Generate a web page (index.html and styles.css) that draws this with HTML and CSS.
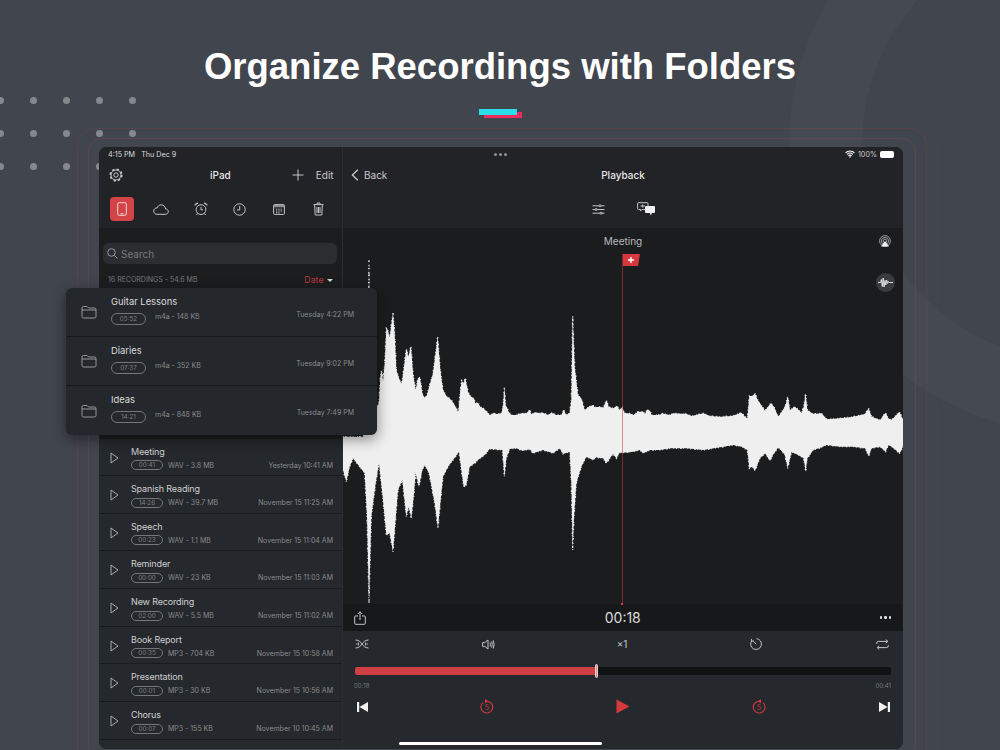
FILE: index.html
```html
<!DOCTYPE html>
<html lang="en">
<head>
    <meta charset="UTF-8">
    <title>Organize Recordings with Folders</title>
    <link rel="stylesheet" href="styles.css">
</head>
<body>
    <svg class="defs" width="0" height="0">
        <symbol id="i-play" viewBox="0 0 9 12"><path d="M1 1 L8 6 L1 11 Z"/></symbol>
        <symbol id="i-folder" viewBox="0 0 16 14"><path d="M1 3 Q1 1.5 2.5 1.5 H6 L7.5 3 H13.5 Q15 3 15 4.5 V11.5 Q15 13 13.5 13 H2.5 Q1 13 1 11.5 Z M1 5 H15"/></symbol>
    </svg>

    <div class="backdrop">
        <div class="ring-bg"></div>
        <div class="dots">
            <i></i><i></i><i></i><i></i><i></i>
            <i></i><i></i><i></i><i></i><i></i>
            <i></i><i></i><i></i><i></i><i></i>
        </div>
        <div class="outline outline-1"></div>
        <div class="outline outline-2"></div>
        <div class="outline outline-3"></div>
    </div>

    <h1 class="title">Organize Recordings with Folders</h1>
    <div class="accent"></div>

    <div class="device">
        <!-- Left column -->
        <div class="sidebar">
            <div class="top">
                <div class="status">
                    <span>4:15 PM</span><span class="status-date">Thu Dec 9</span>
                </div>
                <div class="nav side-nav">
                    <svg class="ic gear" width="14" height="14" viewBox="0 0 14 14"><circle cx="7" cy="7" r="2.2"/><circle cx="7" cy="7" r="5"/><circle class="teeth" cx="7" cy="7" r="5.8"/></svg>
                    <span class="nav-title">iPad</span>
                    <svg class="ic plus" width="12" height="12" viewBox="0 0 12 12"><path d="M6 0.5 V11.5 M0.5 6 H11.5"/></svg>
                    <span class="nav-link">Edit</span>
                </div>
                <div class="side-tools">
                    <span class="tool-active"><svg class="ic" width="10" height="14" viewBox="0 0 10 14"><rect x="0.7" y="0.7" width="8.6" height="12.6" rx="1.5"/><path d="M3.5 11.8 H6.5"/></svg></span>
                    <svg class="ic" width="16" height="11" viewBox="0 0 16 11"><path d="M4 10.3 H12.3 C14 10.3 15.3 9 15.3 7.6 C15.3 6 14 4.9 12.6 5 C12.2 2.5 10.4 0.8 8.2 0.8 C6.2 0.8 4.8 2.2 4.3 3.8 C2.2 3.9 0.7 5.3 0.7 7.1 C0.7 9 2.2 10.3 4 10.3 Z"/></svg>
                    <svg class="ic" width="14" height="14" viewBox="0 0 14 14"><circle cx="7" cy="7.6" r="4.9"/><path d="M7 4.8 V7.8 H9 M0.9 3.2 C1.2 1.6 2.6 0.8 4 1.2 Z M13.1 3.2 C12.8 1.6 11.4 0.8 10 1.2 Z M3.4 11.4 L2.4 13 M10.6 11.4 L11.6 13"/></svg>
                    <svg class="ic" width="13" height="13" viewBox="0 0 13 13"><circle cx="6.5" cy="6.5" r="5.7"/><path d="M6.7 2.8 V6.9 H3.8"/></svg>
                    <svg class="ic" width="12" height="11" viewBox="0 0 12 11"><rect x="0.6" y="0.6" width="10.8" height="9.8" rx="1"/><path class="ic-fill" d="M1 1 H11 V3.2 H1 Z"/><path d="M3 5.2 H9 M3 7 H9 M3 8.8 H7" stroke-dasharray="1 0.7"/></svg>
                    <svg class="ic" width="11" height="14" viewBox="0 0 11 14"><path d="M0.5 2.6 H10.5 M4 2.4 V1 H7 V2.4 M1.6 2.8 L2.2 13 H8.8 L9.4 2.8 M4 5 V11 M5.5 5 V11 M7 5 V11"/></svg>
                </div>
            </div>

            <div class="search-wrap">
                <div class="search">
                    <svg class="ic" width="11" height="11" viewBox="0 0 11 11"><circle cx="4.5" cy="4.5" r="3.8"/><path d="M7.3 7.3 L10.5 10.5"/></svg>
                    <span>Search</span>
                </div>
            </div>
            <div class="count-row">
                <span>16 RECORDINGS - 54.6 MB</span>
                <span class="sort">Date <b class="caret"></b></span>
            </div>

            <div class="list">
                <div class="row">
                    <svg class="row-play"><use href="#i-play"/></svg>
                    <div class="row-body">
                        <div class="row-name">Meeting</div>
                        <div class="row-info"><span class="pill">00:41</span><span>WAV - 3.8 MB</span><span class="row-date">Yesterday 10:41 AM</span></div>
                    </div>
                </div>
                <div class="row">
                    <svg class="row-play"><use href="#i-play"/></svg>
                    <div class="row-body">
                        <div class="row-name">Spanish Reading</div>
                        <div class="row-info"><span class="pill">14:26</span><span>WAV - 39.7 MB</span><span class="row-date">November 15 11:25 AM</span></div>
                    </div>
                </div>
                <div class="row">
                    <svg class="row-play"><use href="#i-play"/></svg>
                    <div class="row-body">
                        <div class="row-name">Speech</div>
                        <div class="row-info"><span class="pill">00:23</span><span>WAV - 1.1 MB</span><span class="row-date">November 15 11:04 AM</span></div>
                    </div>
                </div>
                <div class="row">
                    <svg class="row-play"><use href="#i-play"/></svg>
                    <div class="row-body">
                        <div class="row-name">Reminder</div>
                        <div class="row-info"><span class="pill">00:00</span><span>WAV - 23 KB</span><span class="row-date">November 15 11:03 AM</span></div>
                    </div>
                </div>
                <div class="row">
                    <svg class="row-play"><use href="#i-play"/></svg>
                    <div class="row-body">
                        <div class="row-name">New Recording</div>
                        <div class="row-info"><span class="pill">02:00</span><span>WAV - 5.5 MB</span><span class="row-date">November 15 11:02 AM</span></div>
                    </div>
                </div>
                <div class="row">
                    <svg class="row-play"><use href="#i-play"/></svg>
                    <div class="row-body">
                        <div class="row-name">Book Report</div>
                        <div class="row-info"><span class="pill">00:35</span><span>MP3 - 704 KB</span><span class="row-date">November 15 10:58 AM</span></div>
                    </div>
                </div>
                <div class="row">
                    <svg class="row-play"><use href="#i-play"/></svg>
                    <div class="row-body">
                        <div class="row-name">Presentation</div>
                        <div class="row-info"><span class="pill">00:01</span><span>MP3 - 30 KB</span><span class="row-date">November 15 10:56 AM</span></div>
                    </div>
                </div>
                <div class="row">
                    <svg class="row-play"><use href="#i-play"/></svg>
                    <div class="row-body">
                        <div class="row-name">Chorus</div>
                        <div class="row-info"><span class="pill">00:07</span><span>MP3 - 155 KB</span><span class="row-date">November 10 10:45 AM</span></div>
                    </div>
                </div>
                <div class="row">
                    <svg class="row-play"><use href="#i-play"/></svg>
                    <div class="row-body">
                        <div class="row-name">Best Day Of My Life</div>
                    </div>
                </div>
            </div>
        </div>

        <!-- Right column -->
        <div class="detail">
            <div class="top">
                <div class="status status-right">
                    <span class="multi"><i></i><i></i><i></i></span>
                    <span class="status-icons">
                        <svg class="wifi" width="10" height="8" viewBox="0 0 10 8"><path d="M0.5 2.8 C3 0.4 7 0.4 9.5 2.8 M2 4.3 C3.7 2.8 6.3 2.8 8 4.3 M3.4 5.7 C4.3 5 5.7 5 6.6 5.7"/><circle cx="5" cy="7" r="0.8"/></svg>
                        <span>100%</span>
                        <span class="battery"></span>
                    </span>
                </div>
                <div class="nav detail-nav">
                    <span class="back">
                        <svg class="ic chevron" width="8" height="12" viewBox="0 0 8 12"><path d="M6.8 0.8 L1.4 6 L6.8 11.2"/></svg>
                        Back
                    </span>
                    <span class="nav-title">Playback</span>
                    <span></span>
                </div>
                <div class="detail-tools">
                    <svg class="ic" width="13" height="11" viewBox="0 0 13 11"><path d="M0.5 1.8 H7 M9 1.8 H12.5 M0.5 5.5 H3 M5 5.5 H12.5 M0.5 9.2 H8 M10 9.2 H12.5"/><circle cx="8" cy="1.8" r="1"/><circle cx="4" cy="5.5" r="1"/><circle cx="9" cy="9.2" r="1"/></svg>
                    <svg class="ic" width="18" height="14" viewBox="0 0 18 14"><path d="M1.5 0.7 H10 Q11 0.7 11 1.7 V6.5 Q11 7.5 10 7.5 H5 L3.5 9 V7.5 H1.5 Q0.6 7.5 0.6 6.5 V1.7 Q0.6 0.7 1.5 0.7 Z M3.5 4 H8 M5.7 2.4 V5.6"/><path class="ic-solid" d="M9 4 H17 Q18 4 18 5 V10 Q18 11 17 11 H15 L13.5 13.5 L13 11 H9 Q8 11 8 10 V5 Q8 4 9 4 Z"/></svg>
                </div>
            </div>

            <div class="wave-area">
                <div class="wave-title">Meeting</div>
                <svg class="waveform" viewBox="0 0 1680 1080" preserveAspectRatio="none">
                    <polygon points="0,560 60,560 72,540 76,300 78,30 80,300 84,500 100,480 108,455 112,380 116,360 120,395 125,340 130,235 135,240 140,265 146,215 150,188 155,250 160,360 168,385 176,403 183,350 190,295 196,322 204,288 210,370 218,420 225,385 231,382 238,430 245,445 252,435 258,412 270,370 284,260 292,360 300,420 312,440 325,450 335,465 346,487 352,420 356,392 362,400 367,383 375,425 382,438 392,445 397,460 405,458 412,470 420,475 430,483 440,495 452,490 462,492 475,490 480,470 484,412 488,465 497,485 505,495 520,495 535,490 550,490 560,480 565,493 578,487 590,490 600,488 615,495 625,488 640,495 655,495 662,480 670,495 680,488 685,450 689,195 695,350 705,435 715,445 725,480 735,472 750,465 755,472 770,470 780,475 790,450 797,470 810,475 822,468 830,480 838,472 845,490 860,490 871,495 885,485 901,485 906,492 911,480 921,482 926,495 951,495 956,490 981,495 991,490 1031,492 1046,498 1081,490 1101,498 1131,500 1166,498 1196,488 1206,500 1213,505 1219,438 1228,438 1236,430 1244,450 1251,460 1266,482 1283,460 1293,470 1306,500 1321,478 1328,465 1334,438 1341,480 1356,470 1376,488 1382,470 1388,430 1393,480 1411,492 1436,490 1451,508 1491,505 1531,500 1566,492 1577,475 1586,500 1611,510 1628,488 1636,505 1646,510 1669,485 1676,500 1680,508 1680,585 1676,600 1670,610 1646,590 1636,585 1628,605 1611,590 1586,595 1577,618 1566,595 1531,590 1491,590 1451,585 1436,592 1411,600 1393,625 1388,665 1382,625 1371,618 1346,605 1334,655 1325,612 1321,610 1306,592 1290,615 1281,632 1266,610 1251,625 1236,662 1228,650 1219,655 1213,600 1196,590 1171,585 1131,592 1081,600 1031,595 981,595 951,600 921,600 901,610 891,600 871,605 840,608 830,608 820,625 810,612 790,640 780,625 760,622 750,630 730,620 715,650 700,700 693,800 689,900 685,700 680,605 660,612 650,595 630,610 600,600 570,610 560,598 540,602 520,595 500,597 490,625 484,680 478,600 440,597 425,615 405,630 395,640 380,650 370,705 362,710 355,660 348,605 330,630 315,650 300,680 292,760 285,835 275,760 258,670 245,645 238,660 228,710 218,670 212,740 205,805 197,770 190,800 178,690 165,720 150,905 140,850 130,855 118,730 108,640 98,700 85,800 78,1060 72,800 65,670 50,650 30,625 20,650 10,695 0,660"/>
                </svg>
                <div class="playhead"></div>
                <svg class="flag" width="17" height="12" viewBox="0 0 17 12"><path d="M0 0 H17 L15 12 H0 Z"/><path class="flag-plus" d="M8 3 V9 M5 6 H11"/></svg>
                <svg class="ic airplay" width="12" height="12" viewBox="0 0 12 12"><circle cx="6" cy="6" r="5.4"/><circle cx="6" cy="6" r="3.6"/><circle cx="6" cy="6" r="1.8"/><path class="ic-solid" d="M6 6 L10 11.6 H2 Z"/></svg>
                <span class="wave-btn">
                    <svg class="ic" width="15" height="11" viewBox="0 0 15 11"><path d="M0 5.5 H2.6 L3.4 2.5 L4.3 9.5 L5.2 1 L6.1 10 L7 3.5 L7.8 8 L8.6 3 L9.6 6.5 L10.4 4.5 L11.2 5.5 H15"/></svg>
                </span>
            </div>

            <div class="time-row">
                <svg class="ic" width="12" height="14" viewBox="0 0 12 14"><path d="M4 5 H1.5 Q0.7 5 0.7 5.8 V12.4 Q0.7 13.3 1.5 13.3 H10.5 Q11.3 13.3 11.3 12.4 V5.8 Q11.3 5 10.5 5 H8 M6 9 V0.8 M3.8 3 L6 0.8 L8.2 3"/></svg>
                <span class="time">00:18</span>
                <span class="more"><i></i><i></i><i></i></span>
            </div>

            <div class="controls">
                <div class="ctrl-row">
                    <span class="slot"><svg class="ic" width="14" height="10" viewBox="0 0 14 10"><path d="M0.5 1 C4 1 6 3.5 7 5 C8 6.5 10 9 13.5 9 M0.5 9 C4 9 6 6.5 7 5 C8 3.5 10 1 13.5 1 M1 5 H2.4 M3.4 3.5 V6.5 M10.6 3.5 V6.5 M11.6 5 H13"/></svg></span>
                    <span class="slot slot-wide"><svg class="ic" width="13" height="11" viewBox="0 0 13 11"><path d="M0.6 3.6 H2.8 L6 1 V10 L2.8 7.4 H0.6 Z M8 3.6 Q9 5.5 8 7.4 M9.6 2.4 Q11 5.5 9.6 8.6 M11.2 1.4 Q13 5.5 11.2 9.6"/></svg></span>
                    <span class="slot slot-wide speed">×1</span>
                    <span class="slot slot-wide"><svg class="ic" width="12" height="12" viewBox="0 0 12 12"><path d="M6.6 0.7 A5.4 5.4 0 1 1 1.6 3 M1.4 0.9 L1.6 3.2 L4 3 M6.2 6.3 L3.8 3.6"/></svg></span>
                    <span class="slot"><svg class="ic" width="13" height="11" viewBox="0 0 13 11"><path d="M0.7 5 V4.2 Q0.7 2.4 2.5 2.4 H11.8 M9.8 0.5 L11.8 2.4 L9.8 4.3 M12.3 6 V6.8 Q12.3 8.6 10.5 8.6 H1.2 M3.2 6.7 L1.2 8.6 L3.2 10.5"/></svg></span>
                </div>
                <div class="progress-bar">
                    <div class="progress" style="width: 45%"></div>
                    <div class="knob"></div>
                </div>
                <div class="progress-times"><span>00:18</span><span>00:41</span></div>
                <div class="transport">
                    <svg class="solid-w" width="11" height="10" viewBox="0 0 11 10"><path d="M0 0 H2.2 V10 H0 Z M11 0 V10 L2.4 5 Z"/></svg>
                    <span class="slot-33"><svg class="ic-red" width="14" height="15" viewBox="0 0 14 15"><path d="M8 2.3 A5.9 5.9 0 1 1 3 3.6"/><path class="red-solid" d="M5 0 L8.4 2.2 L5 4.4 Z"/><text x="7" y="11" text-anchor="middle">5</text></svg></span>
                    <span class="slot-33"><svg class="red-solid" width="14" height="15" viewBox="0 0 14 15"><path d="M0.5 0.5 L13.5 7.5 L0.5 14.5 Z"/></svg></span>
                    <span class="slot-33"><svg class="ic-red" width="14" height="15" viewBox="0 0 14 15"><path d="M6 2.3 A5.9 5.9 0 1 0 11 3.6"/><path class="red-solid" d="M9 0 L5.6 2.2 L9 4.4 Z"/><text x="7" y="11" text-anchor="middle">5</text></svg></span>
                    <svg class="solid-w" width="11" height="10" viewBox="0 0 11 10"><path d="M11 0 H8.8 V10 H11 Z M0 0 V10 L8.6 5 Z"/></svg>
                </div>
            </div>
        </div>

        <div class="home-bar"></div>

        <!-- Folder popup sitting over the list -->
        <div class="popup">
            <div class="folder-row">
                <svg class="folder-icon"><use href="#i-folder"/></svg>
                <div class="folder-body">
                    <div class="folder-name">Guitar Lessons</div>
                    <div class="folder-info"><span class="pill pill-lg">05:52</span><span class="folder-meta">m4a - 148 KB</span><span class="folder-date">Tuesday 4:22 PM</span></div>
                </div>
            </div>
            <div class="folder-row">
                <svg class="folder-icon"><use href="#i-folder"/></svg>
                <div class="folder-body">
                    <div class="folder-name">Diaries</div>
                    <div class="folder-info"><span class="pill pill-lg">07:37</span><span class="folder-meta">m4a - 352 KB</span><span class="folder-date">Tuesday 9:02 PM</span></div>
                </div>
            </div>
            <div class="folder-row">
                <svg class="folder-icon"><use href="#i-folder"/></svg>
                <div class="folder-body">
                    <div class="folder-name">Ideas</div>
                    <div class="folder-info"><span class="pill pill-lg">14:21</span><span class="folder-meta">m4a - 848 KB</span><span class="folder-date">Tuesday 7:49 PM</span></div>
                </div>
            </div>
        </div>
    </div>
</body>
</html>
```
FILE: styles.css
```css
html, body {
    margin: 0;
    padding: 0;
}

body {
    position: relative;
    width: 1000px;
    height: 750px;
    overflow: hidden;
    background-color: #41454d;
    font-family: Inter, "Liberation Sans", sans-serif;
    color: #d5d6d8;
}

.defs {
    position: absolute;
}

/* background decoration */
.backdrop {
    position: absolute;
    inset: 0;
    overflow: hidden;
}

.ring-bg {
    position: absolute;
    left: 789px;
    top: -144px;
    width: 432px;
    height: 432px;
    border: 73px solid #454951;
    border-radius: 50%;
}

.dots {
    position: absolute;
    left: -3px;
    top: 97px;
    display: grid;
    grid-template-columns: repeat(5, 7px);
    grid-auto-rows: 7px;
    column-gap: 26px;
    row-gap: 26px;
}

.dots i {
    border-radius: 50%;
    background-color: #85888d;
}

.outline {
    position: absolute;
    border: 1px solid rgba(170, 70, 75, 0.26);
    border-radius: 14px;
}

.outline-1 {
    left: 88px;
    top: 138px;
    width: 826px;
    height: 620px;
}

.outline-2 {
    left: 77px;
    top: 128px;
    width: 848px;
    height: 640px;
    border-color: rgba(170, 70, 75, 0.18);
    border-radius: 18px;
}

.outline-3 {
    left: 70px;
    top: 121px;
    width: 865px;
    height: 654px;
    border-color: rgba(170, 70, 75, 0.09);
    border-radius: 22px;
}

.title {
    position: relative;
    margin: 0;
    padding-top: 45px;
    font-family: "Liberation Sans", Arial, sans-serif;
    font-size: 36.5px;
    line-height: 44px;
    font-weight: bold;
    text-align: center;
    color: #ffffff;
}

.accent {
    position: relative;
    width: 38px;
    height: 6px;
    margin: 20px 0 0 479px;
    background-color: #2bdde6;
    box-shadow: 5px 3px 0 #ee2b5e;
}

/* device frame */
.device {
    position: relative;
    display: flex;
    width: 804px;
    height: 602px;
    margin: 32px 0 0 99px;
}

.sidebar, .detail {
    position: relative;
    display: flex;
    flex-direction: column;
    overflow: hidden;
}

.sidebar > *, .detail > * {
    flex-shrink: 0;
}

.sidebar {
    width: 243px;
    flex-shrink: 0;
    border-right: 1px solid #2c2d30;
    border-radius: 8px 0 0 8px;
    background-color: #1c1d1f;
}

.detail {
    flex: 1;
    border-radius: 0 8px 8px 0;
    background-color: #1b1c1e;
}

.top {
    height: 81px;
    background-color: #222326;
}

.status {
    display: flex;
    align-items: center;
    height: 14px;
    padding: 0 9px;
    font-size: 7.2px;
    color: #dcdcdd;
}

.status-date {
    margin-left: 6px;
}

.status-right {
    position: relative;
    justify-content: flex-end;
}

.multi {
    position: absolute;
    left: 151px;
    top: 6px;
    display: flex;
    gap: 2px;
}

.multi i {
    width: 3px;
    height: 3px;
    border-radius: 50%;
    background-color: #8e8f91;
}

.status-icons {
    display: flex;
    align-items: center;
    gap: 2px;
    color: #c9cacb;
}

.wifi {
    fill: #ffffff;
    margin-right: 1px;
}

.wifi path {
    fill: none;
    stroke: #ffffff;
    stroke-width: 1.1;
}

.battery {
    display: block;
    width: 14px;
    height: 7px;
    margin-left: 1px;
    border-radius: 2px;
    background-color: #ffffff;
}

.ic {
    fill: none;
    stroke: #c4c5c7;
    stroke-width: 1;
    flex-shrink: 0;
}

.ic-fill {
    fill: #8d8e90;
    stroke: none;
}

.ic-solid {
    fill: #f1f1f1;
    stroke: none;
}

.teeth {
    stroke-width: 1.6;
    stroke-dasharray: 2.3 2.25;
}

.nav {
    display: flex;
    align-items: center;
    height: 28px;
    font-size: 10px;
}

.side-nav {
    padding: 0 10px;
}

.nav-title {
    font-weight: 500;
    color: #e6e6e7;
}

.side-nav .nav-title {
    margin-left: 87px;
}

.side-nav .plus {
    margin-left: 61px;
}

.nav-link {
    margin-left: 12px;
    color: #c8c9ca;
}

.side-tools {
    display: grid;
    grid-template-columns: repeat(6, 39.3px);
    justify-items: center;
    align-items: center;
    height: 38px;
    padding: 1px 0 0 3.4px;
}

.tool-active {
    display: flex;
    align-items: center;
    justify-content: center;
    width: 24px;
    height: 24px;
    border-radius: 4px;
    background-color: #d34448;
}

.tool-active .ic {
    stroke: #f3d6d7;
}

.search-wrap {
    padding: 15px 5px 0 4px;
}

.search {
    display: flex;
    align-items: center;
    gap: 3px;
    height: 21px;
    padding-left: 4px;
    border-radius: 6px;
    background-color: #2c2d30;
    font-size: 10px;
    color: #77787b;
}

.search .ic {
    stroke: #98999b;
}

.count-row {
    display: flex;
    align-items: center;
    justify-content: space-between;
    height: 30px;
    padding: 0 9px;
    font-size: 7px;
    color: #77787b;
}

.sort {
    font-size: 8.8px;
    color: #b53a3e;
}

.caret {
    display: inline-block;
    margin-left: 1px;
    border-left: 3px solid transparent;
    border-right: 3px solid transparent;
    border-top: 3.5px solid #d8d8d8;
    vertical-align: 1px;
}

/* recordings */
.list {
    padding-top: 144.5px;
}

.row {
    display: flex;
    align-items: flex-start;
    height: 37.67px;
    box-sizing: border-box;
    border-bottom: 1px solid #1a1b1d;
    background-color: #25282c;
}

.row-play {
    width: 9px;
    height: 12px;
    margin: 13px 12px 0 11px;
    fill: none;
    stroke: #a9aaac;
    stroke-width: 1;
    flex-shrink: 0;
}

.row-body {
    flex: 1;
    padding: 6px 9px 0 0;
}

.row-name {
    font-size: 9px;
    letter-spacing: -0.15px;
    line-height: 13px;
    color: #cfd0d1;
}

.row-info {
    display: flex;
    align-items: center;
    gap: 5px;
    margin-top: 2.5px;
    font-size: 7px;
    color: #8a8b8d;
}

.row-date {
    margin-left: auto;
}

.pill {
    display: inline-block;
    box-sizing: border-box;
    width: 32px;
    height: 10px;
    border: 1px solid #75767a;
    border-radius: 5px;
    font-size: 6.3px;
    line-height: 8px;
    text-align: center;
    color: #808184;
}

.pill-lg {
    width: 35px;
    height: 12px;
    border-radius: 6px;
    line-height: 10px;
}

/* popup */
.popup {
    position: absolute;
    left: -33px;
    top: 141px;
    width: 311px;
    height: 147px;
    border-radius: 6px;
    background-color: #24272c;
    box-shadow: 0 4px 14px rgba(0, 0, 0, 0.45);
}

.folder-row {
    display: flex;
    align-items: center;
    height: 49px;
    box-sizing: border-box;
    border-bottom: 1px solid #17181a;
}

.folder-row:last-child {
    border-bottom: none;
}

.folder-icon {
    width: 16px;
    height: 14px;
    margin: 0 14px 0 15px;
    fill: none;
    stroke: #a3a4a6;
    stroke-width: 0.9;
    flex-shrink: 0;
}

.folder-body {
    flex: 1;
    align-self: flex-start;
    padding: 6.5px 23px 0 0;
}

.folder-name {
    font-size: 9.4px;
    line-height: 13px;
    color: #dcdcdd;
}

.folder-info {
    display: flex;
    align-items: flex-start;
    margin-top: 5.5px;
    font-size: 7px;
    line-height: 9px;
    color: #8a8b8d;
}

.folder-meta {
    margin: -1.5px 0 0 9px;
}

.folder-date {
    margin: -3.5px 0 0 auto;
}

/* detail column */
.detail-nav {
    display: grid;
    grid-template-columns: 1fr auto 1fr;
    padding: 0 8px;
}

.back {
    display: flex;
    align-items: center;
    gap: 5px;
    color: #c8c9ca;
}

.chevron {
    stroke-width: 1.4;
}

.detail-tools {
    display: flex;
    align-items: center;
    justify-content: center;
    gap: 32px;
    height: 38px;
    padding-top: 1px;
}

.wave-area {
    position: relative;
    height: 376px;
}

.wave-title {
    height: 26px;
    font-size: 10px;
    line-height: 26px;
    text-align: center;
    color: #b9babb;
}

.waveform {
    position: absolute;
    left: 0;
    top: 22px;
    width: 560px;
    height: 360px;
    fill: #efefef;
    stroke: #efefef;
    stroke-width: 4;
    stroke-dasharray: 2 4 5 9 3 6 2 11;
}

.playhead {
    position: absolute;
    left: 279px;
    top: 26px;
    width: 1px;
    height: 349px;
    background-color: rgba(196, 56, 60, 0.55);
}

.playhead::after {
    content: "";
    position: absolute;
    left: -1px;
    bottom: -2px;
    width: 2px;
    height: 2px;
    background-color: #d23c40;
}

.flag {
    position: absolute;
    left: 279.5px;
    top: 26px;
    fill: #d6383d;
}

.flag-plus {
    fill: none;
    stroke: #ffffff;
    stroke-width: 1.4;
}

.airplay {
    position: absolute;
    right: 12px;
    top: 7px;
    stroke: #9c9d9f;
}

.wave-btn {
    position: absolute;
    right: 8px;
    top: 45px;
    display: flex;
    align-items: center;
    justify-content: center;
    width: 19px;
    height: 19px;
    border-radius: 50%;
    background-color: #3a3b3e;
}

.wave-btn .ic {
    stroke: #ececec;
    stroke-width: 0.9;
}

.time-row {
    display: flex;
    align-items: center;
    justify-content: space-between;
    height: 27px;
    padding: 0 12px 0 11px;
    background-color: #17181a;
}

.time {
    font-size: 14px;
    color: #dcdcdd;
}

.more {
    display: flex;
    gap: 2px;
}

.more i {
    width: 2.5px;
    height: 2.5px;
    border-radius: 50%;
    background-color: #e2e2e3;
}

.controls {
    flex: 1;
    background-color: #25282d;
}

.ctrl-row {
    display: flex;
    align-items: center;
    gap: 104px;
    height: 26px;
    padding-left: 12px;
}

.slot {
    display: flex;
    justify-content: center;
    width: 14px;
}

.slot-wide {
    width: 30px;
}

.speed {
    font-size: 10px;
    color: #c4c5c7;
}

.progress-bar {
    position: relative;
    height: 7.5px;
    margin: 10px 12px 0 12px;
    border-radius: 2px;
    background-color: #111214;
}

.progress {
    height: 100%;
    border-radius: 2px 0 0 2px;
    background-color: #cf4044;
}

.knob {
    position: absolute;
    left: 240px;
    top: -3px;
    width: 3px;
    height: 14px;
    border-radius: 2px;
    background-color: #e08a8c;
    border: 0.5px solid #f0d0d0;
    box-sizing: border-box;
}

.progress-times {
    display: flex;
    justify-content: space-between;
    margin: 7px 12px 0 11px;
    font-size: 6px;
    line-height: 8px;
    color: #77787b;
}

.transport {
    display: flex;
    align-items: center;
    gap: 103px;
    height: 30px;
    margin-top: 2px;
    padding-left: 13.5px;
}

.slot-33 {
    display: flex;
    justify-content: center;
    width: 33px;
}

.solid-w {
    fill: #f1f1f1;
    flex-shrink: 0;
}

.ic-red {
    fill: none;
    stroke: #c9383d;
    stroke-width: 1.2;
}

.ic-red text {
    font-family: Inter, sans-serif;
    font-size: 7px;
    fill: #c9383d;
    stroke: none;
}

.red-solid {
    fill: #d5393e;
    stroke: none;
}

.home-bar {
    position: absolute;
    left: 300px;
    top: 595px;
    width: 203px;
    height: 3px;
    border-radius: 2px;
    background-color: #ffffff;
}
```
